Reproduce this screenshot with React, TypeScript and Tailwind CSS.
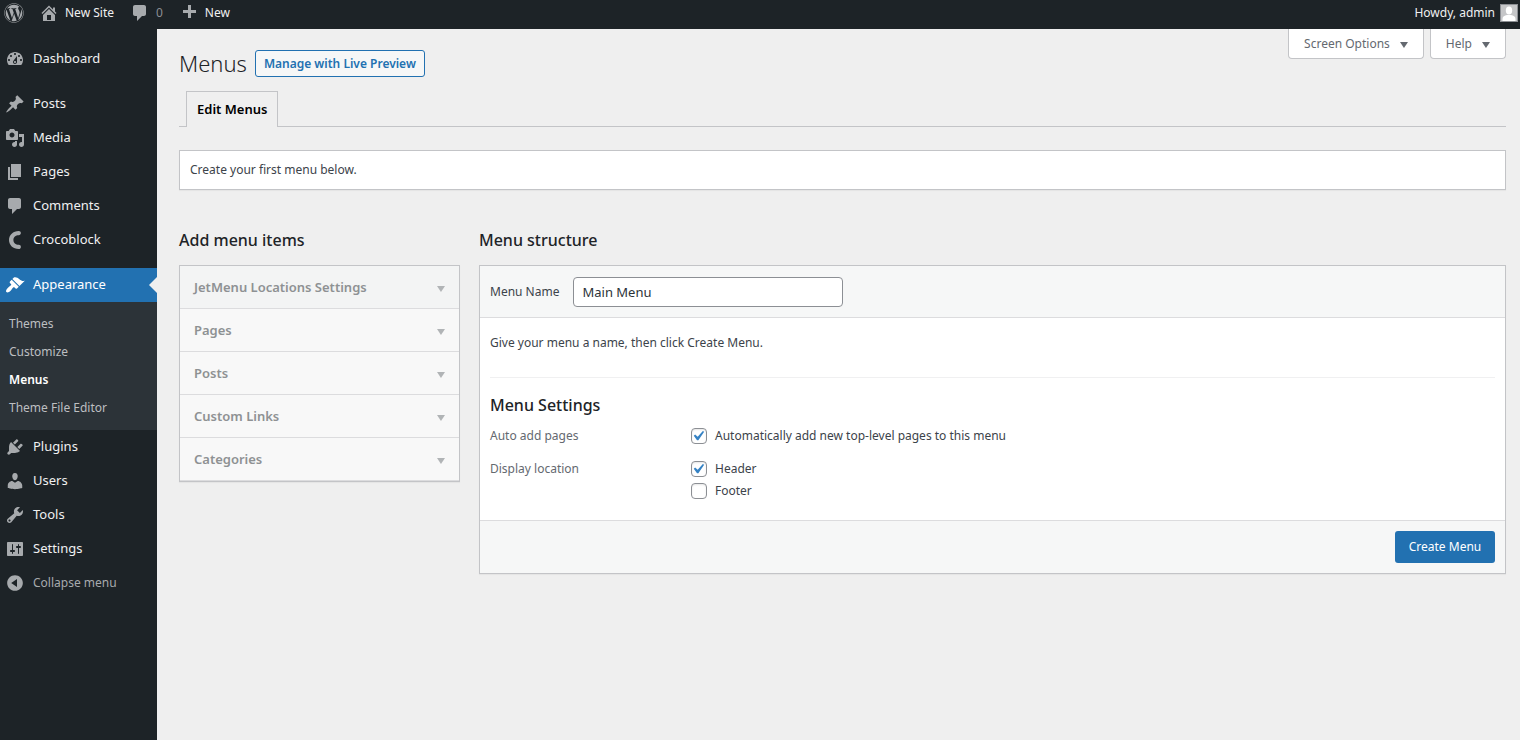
import { useState } from "react";
import { FaWordpress } from "react-icons/fa";

const icons = {
  home: "M16 8.5l1.53 1.53-1.06 1.06L10 4.6l-6.47 6.49-1.06-1.06L10 2.5l4 4v-2h2v4zm-6-2.46l6 5.99V18H4v-5.97zM12 17v-5H8v5h4z",
  comments:
    "M5 2h9c1.1 0 2 .9 2 2v7c0 1.1-.9 2-2 2h-2l-5 5v-5H5c-1.1 0-2-.9-2-2V4c0-1.1.9-2 2-2z",
  plus: "M17 7v3h-5v5H9v-5H4V7h5V2h3v5h5z",
  dashboard:
    "M3.76 16h12.48c1.1-1.37 1.76-3.11 1.76-5 0-4.42-3.58-8-8-8s-8 3.58-8 8c0 1.89.66 3.63 1.76 5zM10 4c.55 0 1 .45 1 1s-.45 1-1 1-1-.45-1-1 .45-1 1-1zM6 6c.55 0 1 .45 1 1s-.45 1-1 1-1-.45-1-1 .45-1 1-1zm8 0c.55 0 1 .45 1 1s-.45 1-1 1-1-.45-1-1 .45-1 1-1zm-5.37 5.55L12 7v6c0 1.1-.9 2-2 2s-2-.9-2-2c0-.57.24-1.08.63-1.45zM4 10c.55 0 1 .45 1 1s-.45 1-1 1-1-.45-1-1 .45-1 1-1zm12 0c.55 0 1 .45 1 1s-.45 1-1 1-1-.45-1-1 .45-1 1-1zm-5 3c0-.55-.45-1-1-1s-1 .45-1 1 .45 1 1 1 1-.45 1-1z",
  posts:
    "M10.44 3.02l1.82-1.82 6.36 6.35-1.83 1.82c-1.05-.68-2.48-.57-3.41.36l-.75.75c-.92.93-1.04 2.35-.35 3.41l-1.83 1.82-2.41-2.41-2.8 2.79c-.42.42-3.38 2.71-3.8 2.29s1.86-3.39 2.28-3.81l2.79-2.79L4.1 9.36l1.83-1.82c1.05.69 2.48.57 3.4-.36l.75-.75c.93-.92 1.05-2.35.36-3.41z",
  media:
    "M13 11V4c0-.55-.45-1-1-1h-1.67L9 1H5L3.67 3H2c-.55 0-1 .45-1 1v7c0 .55.45 1 1 1h10c.55 0 1-.45 1-1zM7 4.5c1.38 0 2.5 1.12 2.5 2.5S8.38 9.5 7 9.5 4.5 8.38 4.5 7 5.62 4.5 7 4.5zM14 6h5v10.5c0 1.38-1.12 2.5-2.5 2.5S14 17.88 14 16.5s1.12-2.5 2.5-2.5c.17 0 .34.02.5.05V9h-3V6zm-4 8.05V13h2v3.5c0 1.38-1.12 2.5-2.5 2.5S7 17.88 7 16.5 8.12 14 9.5 14c.17 0 .34.02.5.05z",
  pages: "M6 15V2h10v13H6zm-1 1h8v2H3V5h2v11z",
  crocoblock:
    "M13.800 1C8 1 4 5 4 10s4 9 9.800 9c1.200 0 2.100-.9 2.100-2.100s-.9-2.100-2.100-2.100c-3.200 0-5.400-2-5.400-4.800s2.200-4.800 5.400-4.800c1.200 0 2.100-.9 2.100-2.100s-.9-2.100-2.100-2.100z",
  appearance:
    "M14.48 11.06L7.41 3.99l1.5-1.5c.5-.56 2.3-.47 3.51.32 1.21.8 1.43 1.28 2.91 2.1 1.18.64 2.45 1.26 4.45.85zm-.71.71L6.7 4.7 4.93 6.47c-.39.39-.39 1.02 0 1.41l1.06 1.06c.39.39.39 1.03 0 1.42-.6.6-1.43 1.11-2.21 1.69-.35.26-.7.53-1.01.84C1.43 14.23.4 16.08 1.4 17.07c.99 1 2.84-.03 4.18-1.36.31-.31.58-.66.85-1.02.57-.78 1.08-1.61 1.69-2.21.39-.39 1.02-.39 1.41 0l1.06 1.06c.39.39 1.02.39 1.41 0z",
  plugins:
    "M13.11 4.36L9.87 7.6 8 5.73l3.24-3.24c.35-.34 1.05-.2 1.56.32.52.51.66 1.21.31 1.55zm-8 1.77l.91-1.12 9.01 9.01-1.19.84c-.71.71-2.63 1.16-3.82 1.16H6.14L4.9 17.26c-.59.59-1.54.59-2.12 0-.59-.58-.59-1.53 0-2.12l1.24-1.24v-3.88c0-1.13.4-3.19 1.09-3.89zm7.26 3.97l3.24-3.24c.34-.35 1.04-.21 1.55.31.52.51.66 1.21.31 1.55l-3.24 3.25z",
  users:
    "M10 9.25c-2.27 0-2.73-3.44-2.73-3.44C7 4.02 7.82 2 9.97 2c2.16 0 2.98 2.02 2.71 3.81 0 0-.41 3.44-2.68 3.44zm0 2.57L12.72 10c2.39 0 4.52 2.33 4.52 4.53v2.49s-3.65 1.13-7.24 1.13c-3.65 0-7.24-1.13-7.24-1.13v-2.49c0-2.25 1.94-4.48 4.47-4.48z",
  tools:
    "M16.68 9.77c-1.34 1.34-3.3 1.67-4.95.99l-5.41 6.52c-.99.99-2.59.99-3.58 0s-.99-2.59 0-3.57l6.52-5.42c-.68-1.65-.35-3.61.99-4.95 1.28-1.28 3.12-1.62 4.72-1.06l-2.89 2.89 2.82 2.82 2.86-2.87c.53 1.58.18 3.39-1.08 4.65zM3.81 16.21c.4.39 1.04.39 1.43 0 .4-.4.4-1.04 0-1.43-.39-.4-1.03-.4-1.43 0-.39.39-.39 1.03 0 1.43z",
  settings:
    "M18 16V4c0-.55-.45-1-1-1H3c-.55 0-1 .45-1 1v12c0 .55.45 1 1 1h14c.55 0 1-.45 1-1zM8 11h1c.55 0 1 .45 1 1s-.45 1-1 1H8v1.500c0 .28-.22.5-.5.5s-.5-.22-.5-.5V13H6c-.55 0-1-.45-1-1s.45-1 1-1h1V5.500c0-.28.22-.5.5-.5s.5.22.5.5V11zm5-2h-1c-.55 0-1-.45-1-1s.45-1 1-1h1V5.500c0-.28.22-.5.5-.5s.5.22.5.5V7h1c.55 0 1 .45 1 1s-.45 1-1 1h-1v5.500c0 .28-.22.5-.5.5s-.5-.22-.5-.5V9z",
  collapse:
    "M10 2.16c4.33 0 7.84 3.51 7.84 7.84s-3.51 7.84-7.84 7.84S2.16 14.33 2.16 10 5.71 2.16 10 2.16zm2 11.72V6.12L6.18 9.97z",
  arrow: "M15 8l-4.03 6L7 8h8z",
  check: "M14.83 4.89l1.34.94-5.81 8.38H9.02L5.78 9.67l1.34-1.25 2.57 2.4z",
};

type IconName = keyof typeof icons;

function Icon({ name, className }: { name: IconName; className?: string }) {
  return (
    <svg
      viewBox="0 0 20 20"
      fill="currentColor"
      fillRule="evenodd"
      aria-hidden="true"
      className={`size-5 shrink-0 ${className ?? ""}`}
    >
      <path d={icons[name]} />
    </svg>
  );
}

function NavItem({ icon, label }: { icon: IconName; label: string }) {
  return (
    <li>
      <a href="#" className="flex h-[34px] items-center gap-2 pl-[5px] text-[#f0f0f1]">
        <Icon name={icon} className="text-[#a7aaad]" />
        {label}
      </a>
    </li>
  );
}

function Sidebar() {
  const subItems = ["Themes", "Customize", "Menus", "Theme File Editor"];

  return (
    <nav className="w-[157px] shrink-0 bg-[#1d2327] pt-[13px] text-[13px]">
      <ul>
        <NavItem icon="dashboard" label="Dashboard" />
      </ul>
      <ul className="mt-[11px]">
        <NavItem icon="posts" label="Posts" />
        <NavItem icon="media" label="Media" />
        <NavItem icon="pages" label="Pages" />
        <NavItem icon="comments" label="Comments" />
        <NavItem icon="crocoblock" label="Crocoblock" />
      </ul>
      <ul className="mt-[11px]">
        <li>
          <a
            href="#"
            className="relative flex h-[34px] items-center gap-2 bg-[#2271b1] pl-[5px] text-white"
          >
            <Icon name="appearance" />
            Appearance
            <span className="absolute right-0 top-[9px] border-y-8 border-r-8 border-y-transparent border-r-[#efefef]" />
          </a>
          <ul className="bg-[#2c3338] py-2 text-xs">
            {subItems.map((item) => (
              <li key={item}>
                <a
                  href="#"
                  className={`flex h-7 items-center pl-[9px] ${
                    item === "Menus" ? "font-semibold text-white" : "text-[#bdbfc1]"
                  }`}
                >
                  {item}
                </a>
              </li>
            ))}
          </ul>
        </li>
        <NavItem icon="plugins" label="Plugins" />
        <NavItem icon="users" label="Users" />
        <NavItem icon="tools" label="Tools" />
        <NavItem icon="settings" label="Settings" />
        <li>
          <button type="button" className="flex h-[34px] items-center gap-2 pl-[5px] text-[#a7aaad]">
            <Icon name="collapse" />
            <span className="text-xs">Collapse menu</span>
          </button>
        </li>
      </ul>
    </nav>
  );
}

function AdminBar() {
  return (
    <header className="flex h-[29px] items-center bg-[#1d2327] pb-[3px] pl-1 pr-[2px] text-xs text-[#f0f0f1]">
      <a href="#" aria-label="About WordPress" className="text-[#a7aaad]">
        <FaWordpress className="size-5" />
      </a>
      <a href="#" className="ml-[15px] flex items-center gap-[6px]">
        <Icon name="home" className="text-[#a7aaad]" />
        New Site
      </a>
      <a href="#" className="ml-4 flex items-center gap-[6px] text-[#8c8f94]">
        <Icon name="comments" className="text-[#a7aaad]" />
        0
      </a>
      <a href="#" className="ml-4 flex items-center gap-[6px]">
        <Icon name="plus" className="text-[#a7aaad]" />
        New
      </a>
      <a href="#" className="ml-auto flex items-center gap-[5px]">
        Howdy, admin
        <svg viewBox="0 0 18 18" className="size-[18px]" aria-hidden="true">
          <rect width="18" height="18" fill="#8c8f94" />
          <rect x="1" y="1" width="16" height="16" fill="#c5c6c8" />
          <ellipse cx="9" cy="6.500" rx="3.200" ry="4" fill="#fff" />
          <path d="M2.500 17v-2c0-2.500 2-3.700 4.500-4h4c2.500.3 4.500 1.500 4.500 4v2z" fill="#fff" />
        </svg>
      </a>
    </header>
  );
}

function ScreenTab({ label }: { label: string }) {
  return (
    <button
      type="button"
      className="flex h-[30px] items-center gap-[3px] rounded-b border border-t-0 border-[#c3c4c7] bg-white pl-[15px] pr-[10px] text-xs text-[#646970]"
    >
      {label}
      <Icon name="arrow" />
    </button>
  );
}

interface CheckProps {
  id: string;
  label: string;
  initial: boolean;
}

function Check({ id, label, initial }: CheckProps) {
  const [checked, setChecked] = useState(initial);

  return (
    <div className="flex h-[22px] items-center gap-2">
      <span className="relative size-4">
        <input
          id={id}
          type="checkbox"
          checked={checked}
          onChange={(e) => setChecked(e.target.checked)}
          className="block size-4 appearance-none rounded border border-[#8c8f94] bg-white shadow-[inset_0_1px_2px_rgba(0,0,0,0.1)]"
        />
        {checked && (
          <Icon name="check" className="pointer-events-none absolute -left-[3px] -top-[2px] text-[#3582c4]" />
        )}
      </span>
      <label htmlFor={id}>{label}</label>
    </div>
  );
}

function AddItems() {
  const boxes = ["JetMenu Locations Settings", "Pages", "Posts", "Custom Links", "Categories"];

  return (
    <section className="w-[281px] shrink-0">
      <h2 className="text-base/6 font-medium text-[#1d2327]">Add menu items</h2>
      <div className="mt-[13px] border border-[#c3c4c7] bg-[#f8f8f8] shadow-[0_1px_1px_rgba(0,0,0,0.04)]">
        {boxes.map((box) => (
          <button
            key={box}
            type="button"
            className="flex h-[43px] w-full items-center justify-between border-b border-[#dcdcde] pl-[14px] pr-[9px] pt-px text-[13px] font-semibold text-[#8e9193] first:bg-[#f3f4f4]"
          >
            {box}
            <Icon name="arrow" className="text-[#b1b4b6]" />
          </button>
        ))}
      </div>
    </section>
  );
}

function MenuStructure() {
  const [name, setName] = useState("Main Menu");

  return (
    <section className="min-w-0 flex-1">
      <h2 className="text-base/6 font-medium text-[#1d2327]">Menu structure</h2>
      <form
        onSubmit={(e) => e.preventDefault()}
        className="mt-[13px] border border-[#c3c4c7] bg-white shadow-[0_1px_1px_rgba(0,0,0,0.04)]"
      >
        <div className="flex h-[52px] items-center gap-[14px] border-b border-[#dcdcde] bg-[#f6f7f7] px-[10px]">
          <label htmlFor="menu-name">Menu Name</label>
          <input
            id="menu-name"
            type="text"
            value={name}
            onChange={(e) => setName(e.target.value)}
            className="h-[30px] w-[270px] rounded border border-[#8c8f94] bg-white px-2 text-[13px] text-[#2c3338]"
          />
        </div>
        <div className="px-[10px] pb-[18px] pt-[15px]">
          <p className="leading-5">Give your menu a name, then click Create Menu.</p>
          <hr className="mt-6 border-[#f0f0f1]" />
          <h3 className="mt-[15px] text-base/6 font-medium text-[#1d2327]">Menu Settings</h3>
          <div className="mt-2 flex">
            <p className="w-[201px] shrink-0 leading-[22px] text-[#646970]">Auto add pages</p>
            <Check
              id="auto-add"
              label="Automatically add new top-level pages to this menu"
              initial={true}
            />
          </div>
          <div className="mt-[11px] flex">
            <p className="w-[201px] shrink-0 leading-[22px] text-[#646970]">Display location</p>
            <div>
              <Check id="loc-header" label="Header" initial={true} />
              <Check id="loc-footer" label="Footer" initial={false} />
            </div>
          </div>
        </div>
        <div className="flex justify-end border-t border-[#dcdcde] bg-[#f6f7f7] p-[10px]">
          <button
            type="submit"
            className="h-8 w-[100px] rounded-[3px] bg-[#2271b1] text-center text-xs text-white"
          >
            Create Menu
          </button>
        </div>
      </form>
    </section>
  );
}

export default function App() {
  return (
    <div className="flex min-h-screen flex-col bg-[#efefef] font-['Noto_Sans',sans-serif] text-xs text-[#3c434a]">
      <AdminBar />
      <div className="flex flex-1">
        <Sidebar />
        <main className="min-w-0 flex-1 pl-[22px] pr-[14px]">
          <div className="flex items-start justify-between">
            <div className="flex items-center gap-2 pt-[21px]">
              <h1 className="text-[22px]/[27px] font-light text-[#1d2327]">Menus</h1>
              <button
                type="button"
                className="h-[27px] rounded-[3px] border border-[#2271b1] bg-[#f6f7f7] px-2 text-xs font-semibold text-[#2271b1]"
              >
                Manage with Live Preview
              </button>
            </div>
            <div className="flex gap-[6px]">
              <ScreenTab label="Screen Options" />
              <ScreenTab label="Help" />
            </div>
          </div>

          <nav className="mt-[14px] flex border-b border-[#c3c4c7] pl-[7px]">
            <a
              href="#"
              className="-mb-px flex h-9 items-center border border-b-0 border-[#c3c4c7] bg-[#efefef] px-[10px] text-[13px] font-semibold text-black"
            >
              Edit Menus
            </a>
          </nav>

          <div className="mt-[23px] flex h-10 items-center border border-[#c3c4c7] bg-white px-[10px] shadow-[0_1px_1px_rgba(0,0,0,0.04)]">
            Create your first menu below.
          </div>

          <div className="mt-[38px] flex items-start gap-[19px]">
            <AddItems />
            <MenuStructure />
          </div>
        </main>
      </div>
    </div>
  );
}
